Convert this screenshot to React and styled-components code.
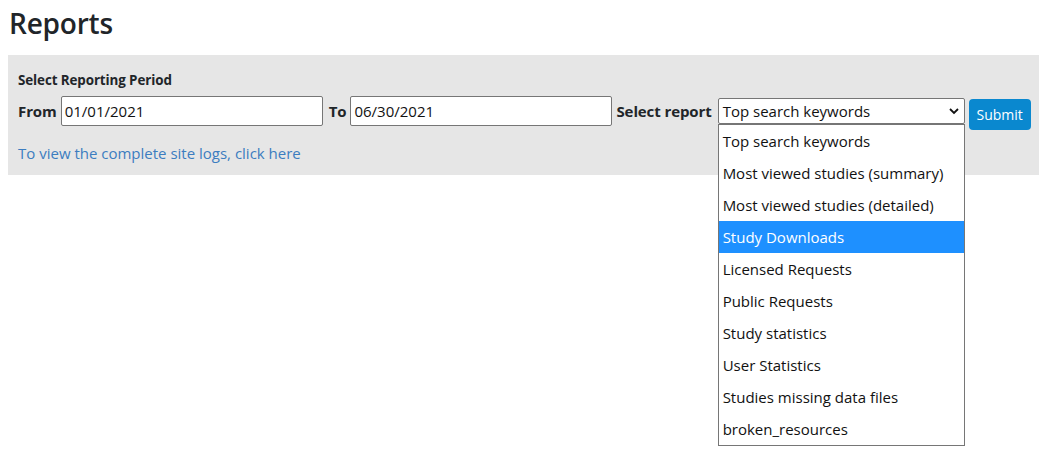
import React from "react";
import styled, { createGlobalStyle } from "styled-components";

const GlobalStyle = createGlobalStyle`
  body {
    margin: 0;
    background: #fff;
    font-family: "Open Sans", "Noto Sans", sans-serif;
    color: #212529;
  }
`;

const Page = styled.div`
  padding: 0 0 0 8px;
  min-height: 455px;
`;

const Title = styled.h1`
  margin: 0;
  padding: 4px 0 0 1px;
  height: 55px;
  box-sizing: border-box;
  font-size: 28px;
  font-weight: 600;
  letter-spacing: -0.2px;
  color: #212529;
`;

const Panel = styled.div`
  background: #e6e6e6;
  padding: 17px 10px 10px;
  height: 120px;
  box-sizing: border-box;
`;

const SmallHeading = styled.div`
  font-size: 13.4px;
  line-height: 17px;
  font-weight: 700;
  letter-spacing: -0.1px;
  margin-bottom: 6px;
`;

const Row = styled.div`
  display: flex;
  align-items: center;
  height: 32px;
  & > * {
    flex-shrink: 0;
  }
`;

const Label = styled.label`
  font-size: 15px;
  font-weight: 700;
  letter-spacing: -0.1px;
  white-space: nowrap;
  margin-right: ${(p) => p.$after || 4}px;
  margin-left: ${(p) => p.$gap || 0}px;
`;

const DateInput = styled.div`
  width: 262px;
  height: 30px;
  box-sizing: border-box;
  border: 1px solid #767676;
  border-radius: 2px;
  background: #fff;
  font-size: 15px;
  padding: 0 3px;
  display: flex;
  align-items: center;
  color: #111;
`;

const SelectWrap = styled.div`
  position: relative;
`;

const SelectBox = styled.div`
  width: 247px;
  height: 26px;
  box-sizing: border-box;
  border: 1px solid #767676;
  border-radius: 2px;
  background: #fff;
  font-size: 15px;
  padding: 0 4px;
  display: flex;
  align-items: center;
  justify-content: space-between;
  color: #111;
`;

const Menu = styled.ul`
  position: absolute;
  top: 26px;
  left: 0;
  width: 247px;
  box-sizing: border-box;
  margin: 0;
  padding: 0;
  list-style: none;
  background: #fff;
  border: 1px solid #767676;
  z-index: 5;
`;

const Option = styled.li`
  height: 32px;
  display: flex;
  align-items: center;
  padding: 0 4px;
  font-size: 15px;
  white-space: nowrap;
  color: ${(p) => (p.$active ? "#fff" : "#111")};
  background: ${(p) => (p.$active ? "#1e90ff" : "transparent")};
`;

const Submit = styled.button`
  margin-left: 4px;
  margin-top: 6px;
  height: 31px;
  width: 62px;
  padding: 0;
  border: none;
  border-radius: 4px;
  background: #0a88cf;
  color: #fff;
  font-family: inherit;
  font-size: 14px;
`;

const LogLink = styled.a`
  display: inline-block;
  margin-top: 16px;
  font-size: 15px;
  line-height: 20px;
  color: #3c7dc0;
  text-decoration: none;
`;

const reports = [
  "Top search keywords",
  "Most viewed studies (summary)",
  "Most viewed studies (detailed)",
  "Study Downloads",
  "Licensed Requests",
  "Public Requests",
  "Study statistics",
  "User Statistics",
  "Studies missing data files",
  "broken_resources",
];

const Chevron = () => (
  <svg width="12" height="8" viewBox="0 0 12 8">
    <path d="M2 2 L6 6 L10 2" fill="none" stroke="#111" strokeWidth="1.8" />
  </svg>
);

export default function App() {
  return (
    <Page>
      <GlobalStyle />
      <Title>Reports</Title>
      <Panel>
        <SmallHeading>Select Reporting Period</SmallHeading>
        <Row>
          <Label>From</Label>
          <DateInput>01/01/2021</DateInput>
          <Label $gap={6}>To</Label>
          <DateInput>06/30/2021</DateInput>
          <Label $gap={4} $after={6}>Select report</Label>
          <SelectWrap>
            <SelectBox>
              Top search keywords
              <Chevron />
            </SelectBox>
            <Menu>
              {reports.map((r, i) => (
                <Option key={r} $active={i === 3}>
                  {r}
                </Option>
              ))}
            </Menu>
          </SelectWrap>
          <Submit>Submit</Submit>
        </Row>
        <LogLink href="#">To view the complete site logs, click here</LogLink>
      </Panel>
    </Page>
  );
}
